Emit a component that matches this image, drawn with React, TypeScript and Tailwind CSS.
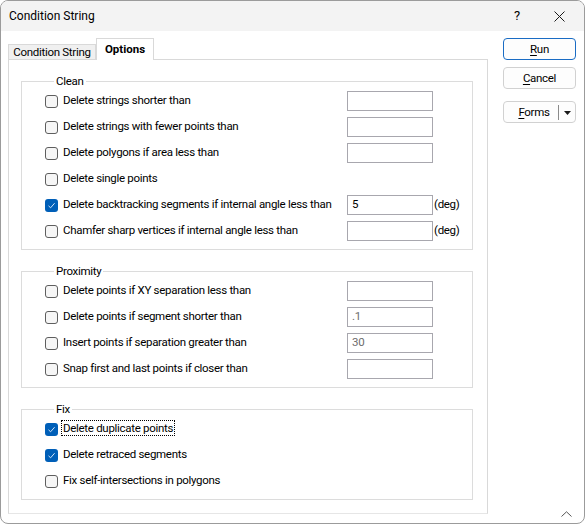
import React from "react";

type Row = {
  label: string;
  checked?: boolean;
  input?: boolean;
  value?: string;
  dim?: boolean;
  unit?: string;
  focus?: boolean;
};

const cleanRows: Row[] = [
  { label: "Delete strings shorter than", input: true },
  { label: "Delete strings with fewer points than", input: true },
  { label: "Delete polygons if area less than", input: true },
  { label: "Delete single points" },
  {
    label: "Delete backtracking segments if internal angle less than",
    input: true,
    value: "5",
    unit: "(deg)",
    checked: true,
  },
  { label: "Chamfer sharp vertices if internal angle less than", input: true, unit: "(deg)" },
];

const proximityRows: Row[] = [
  { label: "Delete points if XY separation less than", input: true },
  { label: "Delete points if segment shorter than", input: true, value: ".1", dim: true },
  { label: "Insert points if separation greater than", input: true, value: "30", dim: true },
  { label: "Snap first and last points if closer than", input: true },
];

const fixRows: Row[] = [
  { label: "Delete duplicate points", checked: true, focus: true },
  { label: "Delete retraced segments", checked: true },
  { label: "Fix self-intersections in polygons" },
];

function Checkbox({ checked }: { checked?: boolean }) {
  if (checked) {
    return (
      <span className="flex h-[13px] w-[13px] shrink-0 items-center justify-center rounded-[3px] bg-[#005fb8]">
        <svg width="9" height="9" viewBox="0 0 9 9" fill="none">
          <path d="M1.5 4.8 L3.6 6.8 L7.6 2.2" stroke="#cfe3f7" strokeWidth="1" />
        </svg>
      </span>
    );
  }
  return (
    <span className="h-[13px] w-[13px] shrink-0 rounded-[3px] border border-[#5e5e5e] bg-[#f6f6f6]" />
  );
}

function OptionRow({ row }: { row: Row }) {
  return (
    <div className="flex h-[26px] items-center">
      <Checkbox checked={row.checked} />
      <div className="ml-[5px] min-w-0 flex-1 whitespace-nowrap">
        {row.focus ? (
          <span className="-ml-[2px] border border-dotted border-black px-px">{row.label}</span>
        ) : (
          <span>{row.label}</span>
        )}
      </div>
      {row.input && (
        <>
          <div
            className={`flex h-[20px] w-[86px] shrink-0 items-center border border-[#a8a7ae] bg-white pl-[4px] ${
              row.dim ? "text-[#6d6d6d]" : "text-black"
            }`}
          >
            {row.value}
          </div>
          <div className="w-[39px] shrink-0 pl-px">{row.unit}</div>
        </>
      )}
    </div>
  );
}

function Group({ title, rows, className }: { title: string; rows: Row[]; className?: string }) {
  return (
    <fieldset className={`w-[452px] border border-[#dcdcdc] pb-[5px] pl-[23px] ${className ?? ""}`}>
      <legend className="ml-[9px] px-[2px] leading-[14px]">{title}</legend>
      {rows.map((r) => (
        <OptionRow key={r.label} row={r} />
      ))}
    </fieldset>
  );
}

function Btn({ first, rest, primary }: { first: string; rest: string; primary?: boolean }) {
  return (
    <div
      className={`flex h-[22px] w-[73px] items-center justify-center rounded-[4px] border bg-[#fdfdfd] pt-px ${
        primary ? "border-[#1a6cc4]" : "border-[#d1d1d1]"
      }`}
    >
      <span>
        <span className="underline underline-offset-2">{first}</span>
        {rest}
      </span>
    </div>
  );
}

export default function App() {
  return (
    <div
      className="h-[525px] w-[586px] bg-white text-[11.5px] tracking-[-0.3px] text-black"
      style={{ fontFamily: 'Roboto, "Liberation Sans", sans-serif' }}
    >
      <div className="flex h-[524px] w-[585px] flex-col overflow-hidden rounded-[8px] border border-[#9b9b9b] bg-white">
        {/* title bar */}
        <div className="flex h-[30px] shrink-0 items-center bg-[#f3f3f3] pl-[8px] tracking-normal">
          <span className="flex-1 text-[12px]">Condition String</span>
          <span className="w-[16px] text-center text-[13px]">?</span>
          <span className="ml-[26px] mr-[17px] flex w-[16px] justify-center">
            <svg width="11" height="11" viewBox="0 0 11 11">
              <path d="M0.5 0.5 L10.5 10.5 M10.5 0.5 L0.5 10.5" stroke="#1a1a1a" strokeWidth="1" />
            </svg>
          </span>
        </div>

        <div className="flex flex-1 pl-[7px] pt-[7px]">
          {/* tabs + page */}
          <div className="flex flex-col">
            <div className="flex h-[21px] items-end">
              <div className="flex h-[15px] w-[88px] items-center justify-center whitespace-nowrap border border-b-0 border-[#d9d9d9] bg-[#f0f0f0] leading-[14px]">
                Condition String
              </div>
              <div className="relative z-10 -mb-px flex h-[22px] w-[58px] items-center justify-center border border-b-0 border-[#d9d9d9] bg-white font-bold tracking-normal">
                Options
              </div>
            </div>
            <div className="h-[455px] w-[480px] border border-[#d9d9d9] border-b-[#e6e6e6] pl-[12px] pt-[14px]">
              <Group title="Clean" rows={cleanRows} />
              <Group title="Proximity" rows={proximityRows} className="mt-[14px]" />
              <Group title="Fix" rows={fixRows} className="mt-[14px]" />
            </div>
          </div>

          {/* right buttons */}
          <div className="ml-[15px] flex flex-col">
            <Btn first="R" rest="un" primary />
            <div className="mt-[7px]">
              <Btn first="C" rest="ancel" />
            </div>
            <div className="mt-[12px] flex h-[22px] w-[73px] items-center rounded-[4px] border border-[#d1d1d1] bg-[#fdfdfd] pt-px">
              <span className="flex-1 pl-[6px] text-center">
                <span className="underline underline-offset-2">F</span>orms
              </span>
              <span className="h-[15px] w-px bg-[#8a8a8a]" />
              <span className="flex w-[16px] justify-center">
                <svg width="7" height="4" viewBox="0 0 7 4">
                  <path d="M0 0 H7 L3.5 4 Z" fill="#1a1a1a" />
                </svg>
              </span>
            </div>
            <div className="flex-1" />
            <div className="mb-[6px] flex justify-end pr-[4px]">
              <svg width="11" height="6" viewBox="0 0 11 6" fill="none">
                <path d="M0.5 5.5 L5.5 0.8 L10.5 5.5" stroke="#555" strokeWidth="1" />
              </svg>
            </div>
          </div>
        </div>
      </div>
    </div>
  );
}
